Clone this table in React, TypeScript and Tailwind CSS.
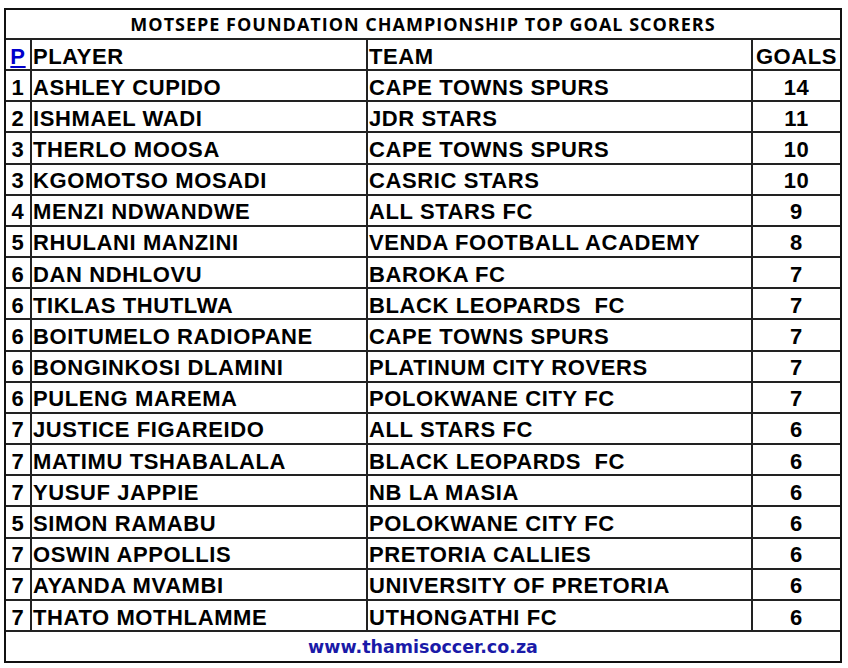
const rows: [string, string, string, string][] = [
  ["1", "ASHLEY CUPIDO", "CAPE TOWNS SPURS", "14"],
  ["2", "ISHMAEL WADI", "JDR STARS", "11"],
  ["3", "THERLO MOOSA", "CAPE TOWNS SPURS", "10"],
  ["3", "KGOMOTSO MOSADI", "CASRIC STARS", "10"],
  ["4", "MENZI NDWANDWE", "ALL STARS FC", "9"],
  ["5", "RHULANI MANZINI", "VENDA FOOTBALL ACADEMY", "8"],
  ["6", "DAN NDHLOVU", "BAROKA FC", "7"],
  ["6", "TIKLAS THUTLWA", "BLACK LEOPARDS  FC", "7"],
  ["6", "BOITUMELO RADIOPANE", "CAPE TOWNS SPURS", "7"],
  ["6", "BONGINKOSI DLAMINI", "PLATINUM CITY ROVERS", "7"],
  ["6", "PULENG MAREMA", "POLOKWANE CITY FC", "7"],
  ["7", "JUSTICE FIGAREIDO", "ALL STARS FC", "6"],
  ["7", "MATIMU TSHABALALA", "BLACK LEOPARDS  FC", "6"],
  ["7", "YUSUF JAPPIE", "NB LA MASIA", "6"],
  ["5", "SIMON RAMABU", "POLOKWANE CITY FC", "6"],
  ["7", "OSWIN APPOLLIS", "PRETORIA CALLIES", "6"],
  ["7", "AYANDA MVAMBI", "UNIVERSITY OF PRETORIA", "6"],
  ["7", "THATO MOTHLAMME", "UTHONGATHI FC", "6"],
];

const grid = "grid grid-cols-[26px_336px_385px_1fr]";
const cell = "flex items-center pt-[4px] border-r-2 border-[#222] whitespace-pre";

export default function App() {
  return (
    <div className="w-[848px] h-[668px] bg-white pt-[8px] pl-[4px]">
      <div className="w-[838px] h-[655px] border-2 border-[#111] flex flex-col font-['Liberation_Sans',Arial,sans-serif] font-bold text-[22px] tracking-[0.6px] leading-none text-black">
        <div className="h-[30px] shrink-0 flex items-center justify-center border-b-2 border-[#222] font-['Open_Sans',sans-serif] text-[18px] tracking-[1px]">
          MOTSEPE FOUNDATION CHAMPIONSHIP TOP GOAL SCORERS
        </div>
        <div className={`${grid} h-[31px] shrink-0 border-b-2 border-[#222]`}>
          <div className={`${cell} justify-center`}>
            <span className="text-[#0000cc] underline decoration-2 underline-offset-2">P</span>
          </div>
          <div className={`${cell} pl-[1px]`}>PLAYER</div>
          <div className={`${cell} pl-[1px]`}>TEAM</div>
          <div className="flex items-center justify-center pt-[4px]">GOALS</div>
        </div>
        <div className="flex-1 min-h-0 flex flex-col">
          {rows.map((r, i) => (
            <div key={i} className={`${grid} flex-1 min-h-0 border-b-2 border-[#222]`}>
              <div className={`${cell} justify-center`}>{r[0]}</div>
              <div className={`${cell} pl-[1px]`}>{r[1]}</div>
              <div className={`${cell} pl-[1px]`}>{r[2]}</div>
              <div className="flex items-center justify-center pt-[4px]">{r[3]}</div>
            </div>
          ))}
        </div>
        <div className="h-[29px] shrink-0 flex items-center justify-center pt-[3px] font-['DejaVu_Sans',Verdana,sans-serif] text-[17.5px] tracking-[0px] text-[#1a1aa8]">
          www.thamisoccer.co.za
        </div>
      </div>
    </div>
  );
}
